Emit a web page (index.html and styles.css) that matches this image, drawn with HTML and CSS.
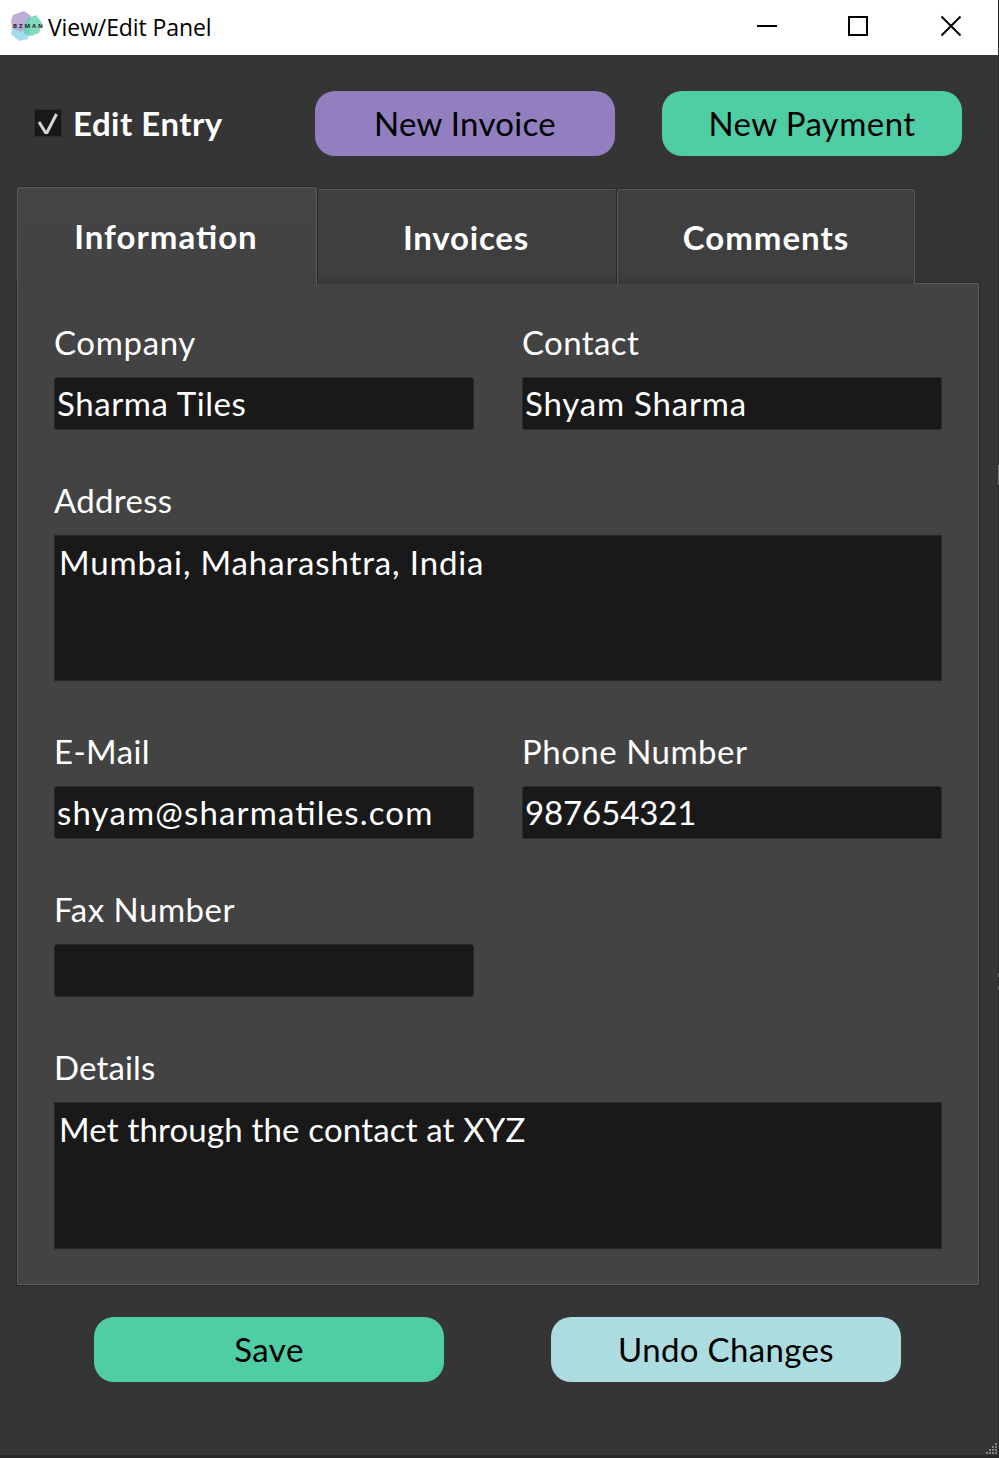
FILE: index.html
```html
<!DOCTYPE html>
<html lang="en">
<head>
<meta charset="utf-8">
<title>View/Edit Panel</title>
<link rel="stylesheet" href="styles.css">
</head>
<body>
<div class="window">
  <header class="titlebar">
    <svg class="logo" width="34" height="34" viewBox="0 0 34 34">
      <path d="M2 17L14 14L20 20L18 29L9 31L1 24Z" fill="#a3dcef"/>
      <path d="M3 5L14 1L21 6L19 17L11 22L2 18L1 11Z" fill="#b6a7d3" fill-opacity=".92"/>
      <path d="M18 8L26 5L32 13L29 23L21 26L14 24L14 15Z" fill="#67d3ac" fill-opacity=".82"/>
      <text x="3" y="18" class="logo-text" textLength="30">BZMAN</text>
    </svg>
    <span class="title">View/Edit Panel</span>
    <svg class="controls" width="206" height="24" viewBox="0 0 206 24" fill="none" stroke="#000" stroke-width="2">
      <path d="M0 12H20M92 3H110V21H92Z"/>
      <path d="M184.5 2.5L203.5 21.5M203.5 2.5L184.5 21.5"/>
    </svg>
  </header>
  <main class="body">
    <div class="toolbar">
      <div class="check">
        <svg width="28" height="28" viewBox="0 0 28 28">
          <rect x=".5" y=".5" width="27" height="27" fill="#191919" stroke="#2b2b2b"/>
          <path d="M5 13L11.5 23.5H13L22.5 5" fill="none" stroke="#d6d6d6" stroke-width="3"/>
        </svg>
        <span class="t-edit">Edit Entry</span>
      </div>
      <button class="btn invoice t-newinv">New Invoice</button>
      <button class="btn payment t-newpay">New Payment</button>
    </div>
    <nav class="tabs">
      <div class="tab active"><span class="t-info">Information</span></div>
      <div class="tab"><span class="t-inv">Invoices</span></div>
      <div class="tab last"><span class="t-com">Comments</span></div>
    </nav>
    <section class="panel">
      <div class="field"><span class="label t-company">Company</span><div class="input"><span class="t-tiles">Sharma Tiles</span></div></div>
      <div class="field"><span class="label t-contact">Contact</span><div class="input"><span class="t-shyam">Shyam Sharma</span></div></div>
      <div class="field wide"><span class="label t-address">Address</span><div class="input area"><span class="t-mumbai">Mumbai, Maharashtra, India</span></div></div>
      <div class="field"><span class="label t-email">E-Mail</span><div class="input"><span class="t-mail">shyam@sharmatiles.com</span></div></div>
      <div class="field"><span class="label t-phone">Phone Number</span><div class="input"><span class="t-num">987654321</span></div></div>
      <div class="field solo"><span class="label t-fax">Fax Number</span><div class="input"></div></div>
      <div class="field wide"><span class="label t-details">Details</span><div class="input area tall"><span class="t-met">Met through the contact at XYZ</span></div></div>
    </section>
    <footer class="actions">
      <button class="btn save t-save">Save</button>
      <button class="btn undo t-undo">Undo Changes</button>
    </footer>
  </main>
  <svg class="grip" width="11" height="11" viewBox="0 0 11 11" fill="#858585">
    <path d="M9 0h2v2h-2zM6 3h2v2h-2zM9 3h2v2h-2zM3 6h2v2h-2zM6 6h2v2h-2zM9 6h2v2h-2zM0 9h2v2h-2zM3 9h2v2h-2zM6 9h2v2h-2zM9 9h2v2h-2z"/>
  </svg>
  <div class="edge"></div>
</div>
</body>
</html>
```
FILE: styles.css
```css
* { box-sizing: border-box; }
body { margin: 0; background: #353535; font-family: Lato, sans-serif; font-size: 33px; color: #fff; font-feature-settings: "liga" 1; }
.window { position: relative; width: 999px; height: 1458px; overflow: hidden; background: #353535; border-bottom: 3px solid #2a2829; }
.titlebar { display: flex; height: 55px; background: #fff; color: #000; padding-left: 10px; }
.logo { margin-top: 10px; flex: none; }
.logo-text { font: bold 6px "Open Sans", sans-serif; fill: #222; }
.title { font: 23px/55px "Open Sans", sans-serif; margin-left: 4px; white-space: nowrap; letter-spacing: -.1px; }
.controls { margin: 14px 36px 0 auto; }
.body { padding: 36px 19px 0 17px; }
.toolbar { display: flex; height: 65px; }
.check { display: flex; width: 281px; margin-left: 17px; font-weight: bold; padding-top: 18px; }
.check span { line-height: 29px; margin-left: 11px; white-space: nowrap; }
.btn { border: 0; border-radius: 20px; height: 65px; font: 33px/61px Lato, sans-serif; color: #000; padding: 0; white-space: nowrap; }
.invoice { width: 300px; background: #927fbf; }
.payment { width: 300px; margin-left: 47px; background: #4fcea6; }

.tabs { display: flex; align-items: flex-end; height: 97px; margin-top: 31px; position: relative; z-index: 1; margin-bottom: -1px; }
.tab { width: 300px; height: 95px; border: solid #292929; border-top-color: #595959; border-width: 1px 1px 0; border-radius: 3px 3px 0 0; background: linear-gradient(#3f3f3f 85%, #393939); box-shadow: 0 -1px #292929; text-align: center; font-weight: bold; line-height: 95px; padding-right: 2px; }
.tab.active { height: 99px; margin-bottom: -2px; border-color: #595959; background: linear-gradient(#464646, #434343 50%); line-height: 96px; }
.tab.last { width: 298px; border-color: #595959; padding-right: 0; }

.panel { display: grid; grid-template-columns: 420px 420px; column-gap: 48px; align-content: start; width: 962px; height: 1002px; padding: 36px 36px 0; background: #434343; border: 1px solid #5a5a5a; box-shadow: 0 0 0 1px #292929; }
.field { height: 158px; }
.field.wide { grid-column: span 2; height: 251px; }
.field.solo { grid-column: span 2; width: 420px; }
.label { display: block; height: 57px; line-height: 45px; white-space: nowrap; }
.input { height: 53px; background: #191919; border: 1px solid #292929; border-radius: 3px; padding-left: 2px; line-height: 51px; white-space: nowrap; }
.input.area { height: 146px; padding-left: 4px; border-radius: 0; line-height: 53px; }
.input.tall { height: 147px; }

.actions { display: flex; margin: 32px 0 0 77px; }
.save { width: 350px; background: #4fcea6; }
.undo { width: 350px; margin-left: 107px; background: #acdce0; }
.grip { position: absolute; right: 2px; bottom: 1px; }
.edge { position: absolute; right: 0; top: 0; width: 1px; height: 1458px; background: linear-gradient(#292929 465px, #777 465px 485px, #292929 485px 973px, #666 973px 977px, #292929 977px 986px, #666 986px 990px, #292929 990px); }

/* tracking per string */
.t-edit { letter-spacing: .5px; }
.t-newinv { letter-spacing: .3px; }
.t-newpay { letter-spacing: .4px; }
.t-info { letter-spacing: 1px; }
.t-inv { letter-spacing: .8px; }
.t-com { letter-spacing: 1px; }
.t-company { letter-spacing: .65px; }
.t-contact { letter-spacing: .4px; }
.t-tiles { letter-spacing: .6px; }
.t-shyam { letter-spacing: .8px; }
.t-address { letter-spacing: .3px; }
.t-mumbai { letter-spacing: .87px; }
.t-email { letter-spacing: .4px; }
.t-mail { letter-spacing: 1.15px; }
.t-phone { letter-spacing: .5px; }
.t-num { letter-spacing: -.1px; }
.t-fax { letter-spacing: .5px; }
.t-details { letter-spacing: .15px; }
.t-met { letter-spacing: .17px; }
.t-save { letter-spacing: .5px; }
.t-undo { letter-spacing: .35px; }
```
